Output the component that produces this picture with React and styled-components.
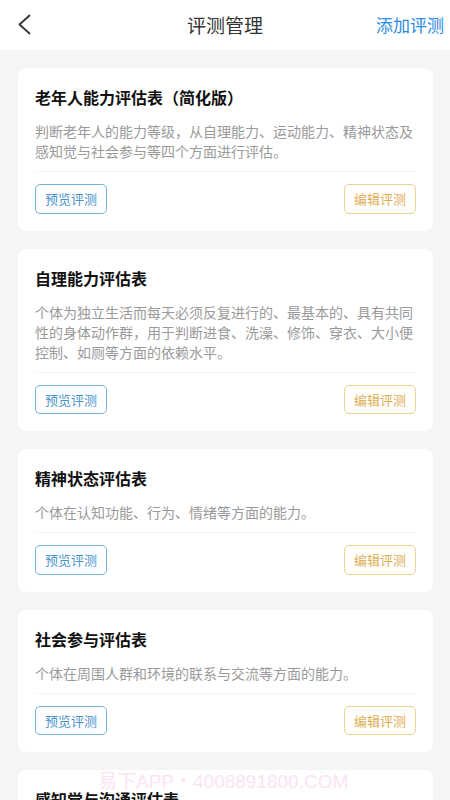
import React from 'react'
import styled, { createGlobalStyle } from 'styled-components'

const GlobalStyle = createGlobalStyle`
    html, body {
        margin: 0;
        padding: 0;
        background: #f5f5f5;
        font-family: "Noto Sans CJK SC", "Noto Sans", sans-serif;
    }
    * {
        box-sizing: border-box;
    }
`

const Page = styled.div`
    position: relative;
    min-height: 800px;
    background: #f5f5f5;
`

const Header = styled.div`
    height: 50px;
    background: #fff;
    display: grid;
    grid-template-columns: 1fr auto 1fr;
    align-items: center;
    padding: 0 6px;
`

const BackButton = styled.button`
    justify-self: start;
    margin-left: 7px;
    border: none;
    background: none;
    padding: 0;
    width: 24px;
    height: 30px;
    display: flex;
    align-items: center;
    justify-content: center;
    svg {
        display: block;
    }
`

const Title = styled.h1`
    margin: 0 0 1px;
    font-size: 19px;
    font-weight: 400;
    color: #333;
`

const AddLink = styled.a`
    justify-self: end;
    font-size: 17px;
    color: #2b8be4;
    text-decoration: none;
    margin-bottom: 1px;
`

const List = styled.div`
    display: flex;
    flex-direction: column;
    gap: 18px;
    padding: 18px 17px 18px 18px;
`

const Card = styled.div`
    background: #fff;
    border-radius: 8px;
    padding: 17px;
`

const CardTitle = styled.h2`
    margin: 0;
    font-size: 16px;
    line-height: 24px;
    font-weight: 700;
    color: #111;
`

const Desc = styled.p`
    margin: 12px 0 0;
    padding-bottom: 10px;
    font-size: 14px;
    line-height: 20px;
    color: #9a9a9a;
    border-bottom: 1px solid #f4f4f4;
`

const Actions = styled.div`
    display: flex;
    justify-content: space-between;
    padding-top: 12px;
`

const ActionButton = styled.button`
    width: 72px;
    height: 29.5px;
    border-radius: 5px;
    background: #fff;
    font-family: inherit;
    font-size: 13px;
    padding: 0;
    border: 1px solid ${p => (p.$edit ? '#eed28f' : '#72b2e2')};
    color: ${p => (p.$edit ? '#e0ad55' : '#4893cc')};
`

const Watermark = styled.div`
    position: absolute;
    left: 98px;
    top: 766px;
    font-family: "Liberation Sans", "Noto Sans CJK SC", sans-serif;
    font-size: 19px;
    color: #fbe3f4;
    white-space: nowrap;
    pointer-events: none;
`

const items = [
    {
        title: '老年人能力评估表（简化版）',
        desc: '判断老年人的能力等级，从自理能力、运动能力、精神状态及感知觉与社会参与等四个方面进行评估。',
    },
    {
        title: '自理能力评估表',
        desc: '个体为独立生活而每天必须反复进行的、最基本的、具有共同性的身体动作群，用于判断进食、洗澡、修饰、穿衣、大小便控制、如厕等方面的依赖水平。',
    },
    {
        title: '精神状态评估表',
        desc: '个体在认知功能、行为、情绪等方面的能力。',
    },
    {
        title: '社会参与评估表',
        desc: '个体在周围人群和环境的联系与交流等方面的能力。',
    },
    {
        title: '感知觉与沟通评估表',
        desc: '个体在意识水平、视力、听力、沟通交流等方面的能力。',
    },
]

const App = () => {
    return (
        <Page>
            <GlobalStyle />
            <Header>
                <BackButton aria-label="返回">
                    <svg width="14" height="22" viewBox="0 0 14 22">
                        <polyline points="11.5,1.5 1.5,10.5 11.5,19.5" fill="none" stroke="#333" strokeWidth="1.8" strokeLinecap="round" strokeLinejoin="round" />
                    </svg>
                </BackButton>
                <Title>评测管理</Title>
                <AddLink href="#add">添加评测</AddLink>
            </Header>
            <List>
                {items.map(item => (
                    <Card key={item.title}>
                        <CardTitle>{item.title}</CardTitle>
                        <Desc>{item.desc}</Desc>
                        <Actions>
                            <ActionButton>预览评测</ActionButton>
                            <ActionButton $edit>编辑评测</ActionButton>
                        </Actions>
                    </Card>
                ))}
            </List>
            <Watermark>易下APP・4008891800.COM</Watermark>
        </Page>
    )
}

export default App
